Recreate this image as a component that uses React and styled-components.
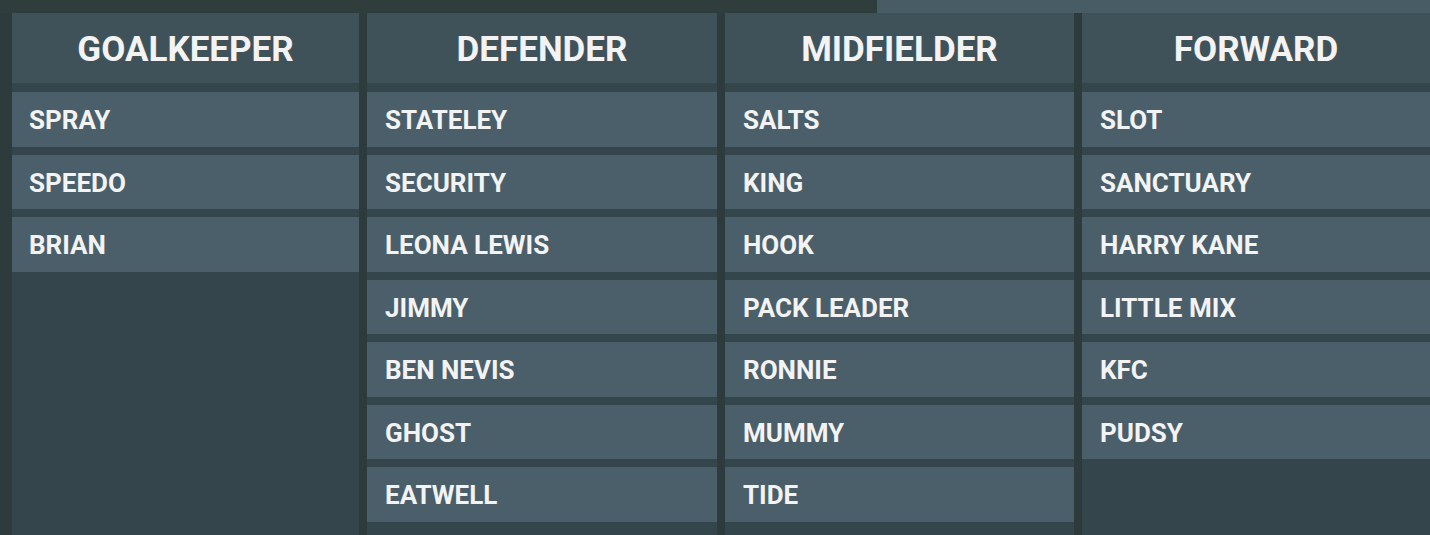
import styled, { createGlobalStyle } from 'styled-components';

const GlobalStyle = createGlobalStyle`
  html, body {
    margin: 0;
    padding: 0;
    background: #2d3b3c;
  }
  body {
    font-family: Roboto, "Liberation Sans", sans-serif;
  }
`;

const Page = styled.div`
  width: 1430px;
  height: 535px;
  overflow: hidden;
  background: #2d3b3c;
  display: flex;
  flex-direction: column;
`;

const TopStrip = styled.div`
  height: 13px;
  display: flex;
  justify-content: flex-end;
  background: #2f3d3d;
`;

const TopTab = styled.div`
  width: 553px;
  background: #485c66;
`;

const Board = styled.div`
  flex: 1;
  display: grid;
  grid-template-columns: 347px 350px 349px 1fr;
  column-gap: 8px;
  padding-left: 12px;
`;

const Column = styled.div`
  background: #35454c;
  display: flex;
  flex-direction: column;
`;

const Header = styled.div`
  height: 70px;
  box-sizing: border-box;
  padding-top: 3px;
  background: #3f525a;
  display: flex;
  align-items: center;
  justify-content: center;
  color: #f3f3f3;
  font-weight: 700;
  font-size: 35px;
  margin-bottom: 9px;
`;

const List = styled.div`
  display: flex;
  flex-direction: column;
  gap: 8px;
`;

const Player = styled.div`
  height: 54.5px;
  box-sizing: border-box;
  padding: 2px 0 0 ${({ $first }) => ($first ? 17 : 18)}px;
  background: #4a5f6a;
  display: flex;
  align-items: center;
  color: #f3f3f3;
  font-weight: 700;
  font-size: 26px;
`;

const positions = [
  { name: 'GOALKEEPER', players: ['SPRAY', 'SPEEDO', 'BRIAN'] },
  {
    name: 'DEFENDER',
    players: ['STATELEY', 'SECURITY', 'LEONA LEWIS', 'JIMMY', 'BEN NEVIS', 'GHOST', 'EATWELL'],
  },
  {
    name: 'MIDFIELDER',
    players: ['SALTS', 'KING', 'HOOK', 'PACK LEADER', 'RONNIE', 'MUMMY', 'TIDE'],
  },
  {
    name: 'FORWARD',
    players: ['SLOT', 'SANCTUARY', 'HARRY KANE', 'LITTLE MIX', 'KFC', 'PUDSY'],
  },
];

function App() {
  return (
    <Page>
      <GlobalStyle />
      <TopStrip>
        <TopTab />
      </TopStrip>
      <Board>
        {positions.map((pos, i) => (
          <Column key={pos.name}>
            <Header>{pos.name}</Header>
            <List>
              {pos.players.map((p) => (
                <Player key={p} $first={i === 0}>{p}</Player>
              ))}
            </List>
          </Column>
        ))}
      </Board>
    </Page>
  );
}

export default App;
